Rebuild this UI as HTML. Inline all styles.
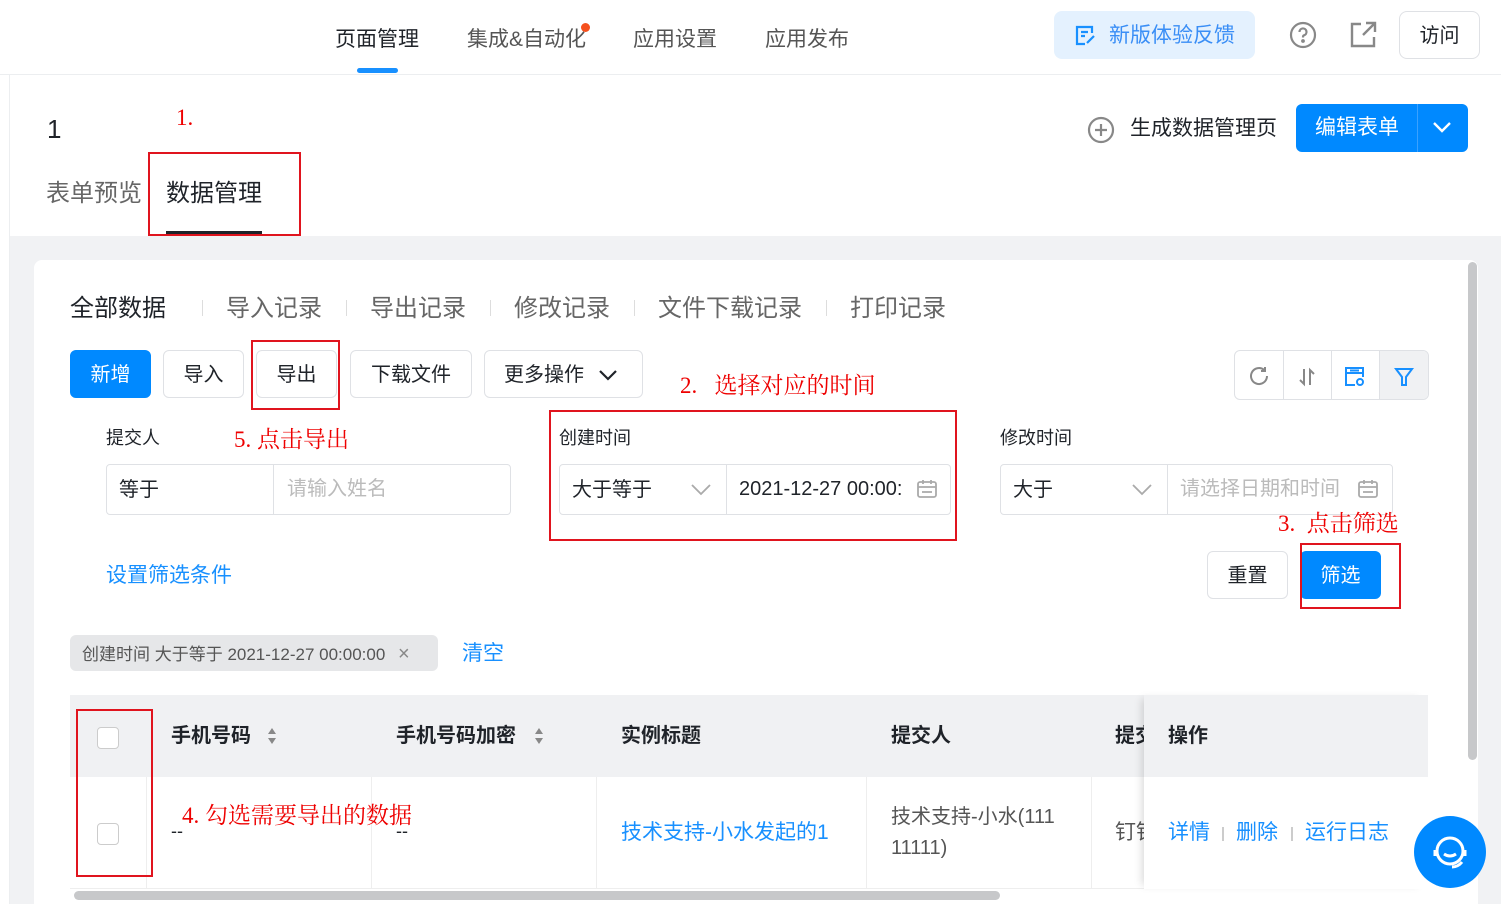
<!DOCTYPE html>
<html><head><meta charset="utf-8"><style>
*{margin:0;padding:0;box-sizing:border-box}
body{width:1501px;height:904px;overflow:hidden;background:#fff;font-family:"Liberation Sans","Noto Sans CJK SC",sans-serif;color:#1f2329;position:relative;line-height:1.1}
.a{position:absolute;white-space:nowrap}
.red{color:#e00;font-family:"Liberation Serif","Noto Serif CJK SC",serif;font-size:23px}
.rbox{position:absolute;border:2px solid #e0141e}
.btn{position:absolute;border:1px solid #dfe1e5;border-radius:6px;background:#fff;font-size:20px;display:flex;align-items:center;justify-content:center;color:#1f2329;padding-top:2px}
.inp{position:absolute;border:1px solid #dfe1e5;border-radius:4px;height:51px;background:#fff;font-size:20px}
.blue{color:#1890ff}
</style></head><body>
<!-- top nav -->
<div class="a" style="left:0;top:74px;width:1501px;border-top:1px solid #eceef0"></div>
<div class="a" style="left:335px;top:28px;font-size:21px">页面管理</div>
<div class="a" style="left:357px;top:68px;width:41px;height:5px;border-radius:3px;background:#1890ff"></div>
<div class="a" style="left:467px;top:28px;font-size:21px;color:#555">集成&amp;自动化</div>
<div class="a" style="left:581px;top:23px;width:9px;height:9px;border-radius:50%;background:#f5501e"></div>
<div class="a" style="left:633px;top:28px;font-size:21px;color:#555">应用设置</div>
<div class="a" style="left:765px;top:28px;font-size:21px;color:#555">应用发布</div>
<div class="a" style="left:1054px;top:11px;width:201px;height:48px;border-radius:8px;background:#e4f1fe"></div>
<svg class="a" style="left:1074px;top:24px" width="22" height="22" viewBox="0 0 22 22" fill="none" stroke="#1890ff" stroke-width="2.2"><path d="M18 9V3H3v17h8"/><path d="M7 8h7M7 12h4"/><path d="M13 19l7-7"/></svg>
<div class="a blue" style="left:1109px;top:24px;font-size:21px;color:#3a8ef6">新版体验反馈</div>
<svg class="a" style="left:1289px;top:21px" width="28" height="28" viewBox="0 0 28 28" fill="none" stroke="#888" stroke-width="2.2"><circle cx="14" cy="14" r="12"/><path d="M10.5 11a3.5 3.5 0 1 1 4.5 3.3c-.8.3-1 .9-1 1.7v.5"/><circle cx="14" cy="20" r=".8" fill="#888"/></svg>
<svg class="a" style="left:1350px;top:21px" width="27" height="27" viewBox="0 0 27 27" fill="none" stroke="#888" stroke-width="2.4"><path d="M11 3H2v22h22v-9"/><path d="M16 2h9v9M25 2L13 14"/></svg>
<div class="btn" style="left:1399px;top:11px;width:81px;height:48px;border-radius:8px">访问</div>

<!-- title area -->
<div class="a" style="left:9px;top:75px;width:1px;height:829px;background:#eceef0"></div>
<div class="a" style="left:47px;top:115px;font-size:26px">1</div>
<svg class="a" style="left:1087px;top:116px" width="28" height="28" viewBox="0 0 28 28" fill="none" stroke="#888" stroke-width="2.2"><circle cx="14" cy="14" r="12"/><path d="M14 8v12M8 14h12"/></svg>
<div class="a" style="left:1130px;top:117px;font-size:21px">生成数据管理页</div>
<div class="a" style="left:1296px;top:104px;width:172px;height:48px;border-radius:6px;background:#0089ff"></div>
<div class="a" style="left:1417px;top:104px;width:1px;height:48px;background:#3aa1ff"></div>
<div class="a" style="left:1315px;top:116px;font-size:21px;color:#fff">编辑表单</div>
<svg class="a" style="left:1431px;top:120px" width="22" height="14" viewBox="0 0 22 14" fill="none" stroke="#fff" stroke-width="2.4"><path d="M3 3l8 8 8-8"/></svg>
<div class="a" style="left:46px;top:181px;font-size:24px;color:#666">表单预览</div>
<div class="a" style="left:166px;top:181px;font-size:24px">数据管理</div>
<div class="a" style="left:166px;top:231px;width:96px;height:3px;background:#1f2329"></div>
<div class="a red" style="left:176px;top:105px">1.</div>
<div class="rbox" style="left:148px;top:152px;width:153px;height:84px"></div>

<!-- grey area -->
<div class="a" style="left:10px;top:236px;width:1491px;height:668px;background:#f1f2f4"></div>
<div class="a" style="left:34px;top:260px;width:1444px;height:660px;background:#fff;border-radius:8px"></div>
<div class="a" style="left:1468px;top:262px;width:9px;height:498px;background:#c7c8ca;border-radius:5px"></div>

<div class="a" style="left:70px;top:296px;font-size:24px">全部数据</div>
<div class="a" style="left:226px;top:296px;font-size:24px;color:#666">导入记录</div>
<div class="a" style="left:370px;top:296px;font-size:24px;color:#666">导出记录</div>
<div class="a" style="left:514px;top:296px;font-size:24px;color:#666">修改记录</div>
<div class="a" style="left:658px;top:296px;font-size:24px;color:#666">文件下载记录</div>
<div class="a" style="left:850px;top:296px;font-size:24px;color:#666">打印记录</div>
<div class="a" style="left:202px;top:300px;width:1px;height:16px;background:#ddd"></div>
<div class="a" style="left:346px;top:300px;width:1px;height:16px;background:#ddd"></div>
<div class="a" style="left:490px;top:300px;width:1px;height:16px;background:#ddd"></div>
<div class="a" style="left:634px;top:300px;width:1px;height:16px;background:#ddd"></div>
<div class="a" style="left:826px;top:300px;width:1px;height:16px;background:#ddd"></div>

<div class="btn" style="left:70px;top:350px;width:81px;height:48px;background:#0089ff;border-color:#0089ff;color:#fff">新增</div>
<div class="btn" style="left:163px;top:350px;width:81px;height:48px">导入</div>
<div class="btn" style="left:256px;top:350px;width:81px;height:48px">导出</div>
<div class="btn" style="left:350px;top:350px;width:122px;height:48px">下载文件</div>
<div class="btn" style="left:484px;top:350px;width:159px;height:48px;justify-content:flex-start;padding-left:19px">更多操作<svg style="margin-left:14px" width="20" height="12" viewBox="0 0 20 12" fill="none" stroke="#1f2329" stroke-width="2.2"><path d="M2 2l8 8 8-8"/></svg></div>
<div class="rbox" style="left:251px;top:340px;width:89px;height:70px"></div>

<div class="a" style="left:1234px;top:350px;width:195px;height:50px;border:1px solid #dfe1e5;border-radius:6px;overflow:hidden">
<div class="a" style="left:145px;top:0;width:49px;height:50px;background:#f0f1f3"></div>
<div class="a" style="left:48px;top:0;width:1px;height:50px;background:#dfe1e5"></div>
<div class="a" style="left:96px;top:0;width:1px;height:50px;background:#dfe1e5"></div>
<div class="a" style="left:144px;top:0;width:1px;height:50px;background:#dfe1e5"></div>
<svg class="a" style="left:13px;top:14px" width="22" height="22" viewBox="0 0 22 22" fill="none" stroke="#888" stroke-width="2"><path d="M19 11a8 8 0 1 1-3-6.2"/><path d="M17 2v4h-4"/></svg>
<svg class="a" style="left:61px;top:15px" width="22" height="22" viewBox="0 0 22 22" fill="none" stroke="#888" stroke-width="2"><path d="M8 3v15l-4-4M14 19V4l4 4"/></svg>
<svg class="a" style="left:108px;top:14px" width="24" height="24" viewBox="0 0 24 24" fill="none" stroke="#1890ff" stroke-width="2"><path d="M12 20H3V3h17v9M3 8h17M7 5.5h9"/><circle cx="17" cy="17" r="3"/></svg>
<svg class="a" style="left:158px;top:15px" width="22" height="22" viewBox="0 0 22 22" fill="none" stroke="#1890ff" stroke-width="2"><path d="M3 3h16l-6 8v8h-4v-8z"/></svg>
</div>

<div class="a red" style="left:680px;top:373px">2.&nbsp;&nbsp; 选择对应的时间</div>
<div class="a" style="left:106px;top:429px;font-size:18px">提交人</div>
<div class="a red" style="left:234px;top:427px">5. 点击导出</div>
<div class="inp" style="left:106px;top:464px;width:405px"><div class="a" style="left:12px;top:14px">等于</div><div class="a" style="left:166px;top:0;width:1px;height:49px;background:#dfe1e5"></div><div class="a" style="left:180px;top:13px;color:#bbb">请输入姓名</div></div>
<div class="a" style="left:559px;top:429px;font-size:18px">创建时间</div>
<div class="inp" style="left:559px;top:464px;width:392px"><div class="a" style="left:12px;top:14px">大于等于</div><svg class="a" style="left:130px;top:18px" width="22" height="14" viewBox="0 0 22 14" fill="none" stroke="#aaa" stroke-width="1.8"><path d="M2 2l9 9 9-9"/></svg><div class="a" style="left:166px;top:0;width:1px;height:49px;background:#dfe1e5"></div><div class="a" style="left:179px;top:13px;width:165px;overflow:hidden">2021-12-27 00:00:</div><svg class="a" style="left:356px;top:13px" width="22" height="22" viewBox="0 0 22 22" fill="none" stroke="#aaa" stroke-width="1.8"><rect x="2" y="4" width="18" height="15" rx="2"/><path d="M2 9h18M7 2v4M15 2v4M6 14h10"/></svg></div>
<div class="rbox" style="left:549px;top:410px;width:408px;height:131px"></div>
<div class="a" style="left:1000px;top:429px;font-size:18px">修改时间</div>
<div class="inp" style="left:1000px;top:464px;width:393px"><div class="a" style="left:12px;top:14px">大于</div><svg class="a" style="left:130px;top:18px" width="22" height="14" viewBox="0 0 22 14" fill="none" stroke="#aaa" stroke-width="1.8"><path d="M2 2l9 9 9-9"/></svg><div class="a" style="left:166px;top:0;width:1px;height:49px;background:#dfe1e5"></div><div class="a" style="left:179px;top:13px;color:#bbb;width:165px;overflow:hidden">请选择日期和时间</div><svg class="a" style="left:356px;top:13px" width="22" height="22" viewBox="0 0 22 22" fill="none" stroke="#aaa" stroke-width="1.8"><rect x="2" y="4" width="18" height="15" rx="2"/><path d="M2 9h18M7 2v4M15 2v4M6 14h10"/></svg></div>

<div class="a red" style="left:1278px;top:511px">3.&nbsp; 点击筛选</div>
<div class="a blue" style="left:106px;top:564px;font-size:21px">设置筛选条件</div>
<div class="btn" style="left:1207px;top:551px;width:81px;height:48px">重置</div>
<div class="btn" style="left:1300px;top:551px;width:81px;height:48px;background:#0089ff;border-color:#0089ff;color:#fff">筛选</div>
<div class="rbox" style="left:1300px;top:543px;width:101px;height:66px"></div>

<div class="a" style="left:70px;top:635px;width:368px;height:36px;border-radius:6px;background:#e6e7e9;font-size:17px;color:#555;padding:8px 12px">创建时间 大于等于 2021-12-27 00:00:00 <span style="margin-left:8px;font-size:20px;color:#888">×</span></div>
<div class="a blue" style="left:462px;top:642px;font-size:21px">清空</div>

<!-- table -->
<div class="a" style="left:70px;top:695px;width:1358px;height:82px;background:#f0f1f3"></div>
<div class="a" style="left:70px;top:777px;width:1358px;height:112px;border-bottom:1px solid #eee"></div>
<div class="a" style="left:146px;top:777px;width:1px;height:112px;background:#eee"></div>
<div class="a" style="left:371px;top:777px;width:1px;height:112px;background:#eee"></div>
<div class="a" style="left:596px;top:777px;width:1px;height:112px;background:#eee"></div>
<div class="a" style="left:866px;top:777px;width:1px;height:112px;background:#eee"></div>
<div class="a" style="left:1091px;top:777px;width:1px;height:112px;background:#eee"></div>
<div class="a" style="left:97px;top:727px;width:22px;height:22px;border:1.5px solid #ccc;border-radius:4px;background:#fff"></div>
<div class="a" style="left:97px;top:823px;width:22px;height:22px;border:1.5px solid #ccc;border-radius:4px;background:#fff"></div>
<div class="a" style="left:171px;top:725px;font-size:20px;font-weight:bold">手机号码</div>
<svg class="a" style="left:266px;top:726px" width="12" height="20" viewBox="0 0 12 20" fill="#888"><path d="M6 2l4 6H2zM6 18l4-6H2z"/></svg>
<div class="a" style="left:396px;top:725px;font-size:20px;font-weight:bold">手机号码加密</div>
<svg class="a" style="left:533px;top:726px" width="12" height="20" viewBox="0 0 12 20" fill="#888"><path d="M6 2l4 6H2zM6 18l4-6H2z"/></svg>
<div class="a" style="left:621px;top:725px;font-size:20px;font-weight:bold">实例标题</div>
<div class="a" style="left:891px;top:725px;font-size:20px;font-weight:bold">提交人</div>
<div class="a" style="left:1115px;top:725px;font-size:20px;font-weight:bold">提交</div>
<div class="a" style="left:171px;top:822px;font-size:18px">--</div>
<div class="a" style="left:396px;top:822px;font-size:18px">--</div>
<div class="a blue" style="left:621px;top:821px;font-size:21px">技术支持-小水发起的1</div>
<div class="a" style="left:891px;top:802px;font-size:20px;color:#555;line-height:31px">技术支持-小水(111<br>11111)</div>
<div class="a" style="left:1115px;top:821px;font-size:21px;color:#555">钉钉</div>
<div class="a" style="left:1144px;top:695px;width:284px;height:194px;background:#fff;box-shadow:-6px 0 8px -4px rgba(0,0,0,.15)"><div style="height:82px;background:#f0f1f3"></div></div>
<div class="a" style="left:1168px;top:725px;font-size:20px;font-weight:bold">操作</div>
<div class="a blue" style="left:1168px;top:821px;font-size:21px">详情</div>
<div class="a" style="left:1222px;top:827px;width:2px;height:14px;background:#ccc"></div>
<div class="a blue" style="left:1236px;top:821px;font-size:21px">删除</div>
<div class="a" style="left:1291px;top:827px;width:2px;height:14px;background:#ccc"></div>
<div class="a blue" style="left:1305px;top:821px;font-size:21px">运行日志</div>
<div class="a" style="left:74px;top:891px;width:926px;height:9px;background:#c7c8ca;border-radius:5px"></div>
<div class="a red" style="left:182px;top:803px">4. 勾选需要导出的数据</div>
<div class="rbox" style="left:76px;top:709px;width:77px;height:168px"></div>
<div class="a" style="left:1414px;top:816px;width:72px;height:72px;border-radius:50%;background:#0089ff"></div>
<svg class="a" style="left:1424px;top:826px" width="52" height="52" viewBox="0 0 52 52" fill="none" stroke="#fff" stroke-width="3"><circle cx="26" cy="25" r="13"/><path d="M20 28q6 4 12 0"/><path d="M11 30v-6M41 30v-6M38 36q-4 5-10 5"/></svg>
</body></html>
